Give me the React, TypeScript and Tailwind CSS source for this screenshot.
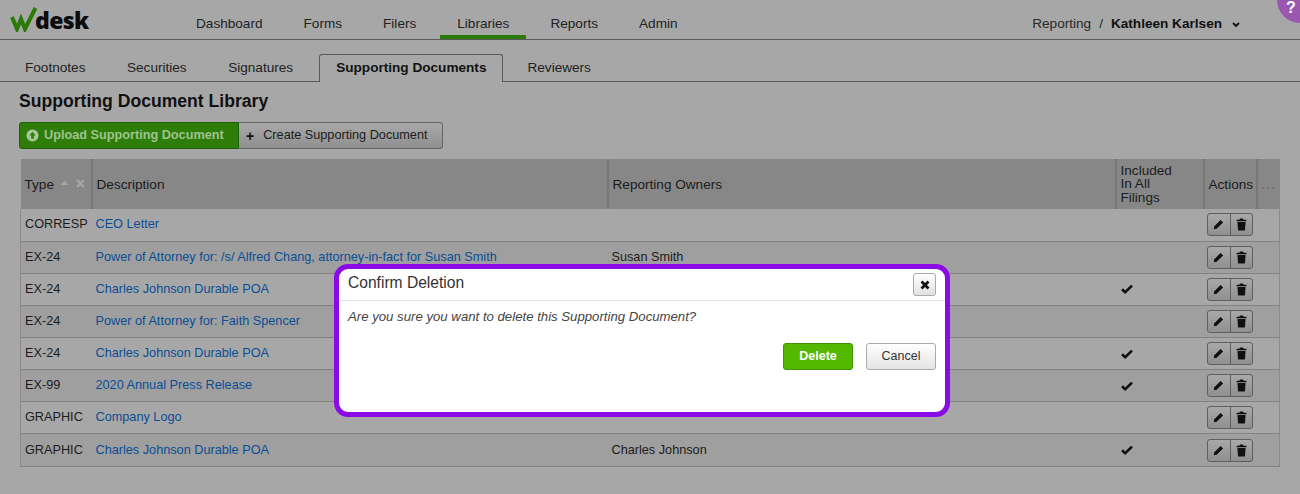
import React from "react";

const font = "font-['Liberation_Sans',Arial,sans-serif]";

const navItems = ["Dashboard", "Forms", "Filers", "Libraries", "Reports", "Admin"];
const tabs = ["Footnotes", "Securities", "Signatures", "Supporting Documents", "Reviewers"];

const rows = [
  { type: "CORRESP", desc: "CEO Letter", owner: "", check: false },
  { type: "EX-24", desc: "Power of Attorney for: /s/ Alfred Chang, attorney-in-fact for Susan Smith", owner: "Susan Smith", check: false },
  { type: "EX-24", desc: "Charles Johnson Durable POA", owner: "", check: true },
  { type: "EX-24", desc: "Power of Attorney for: Faith Spencer", owner: "", check: false },
  { type: "EX-24", desc: "Charles Johnson Durable POA", owner: "", check: true },
  { type: "EX-99", desc: "2020 Annual Press Release", owner: "", check: true },
  { type: "GRAPHIC", desc: "Company Logo", owner: "", check: false },
  { type: "GRAPHIC", desc: "Charles Johnson Durable POA", owner: "Charles Johnson", check: true },
];

function CheckMark() {
  return (
    <svg width="12" height="10" viewBox="0 0 12 10" className="inline-block">
      <path d="M1 5.2 L4.2 8.2 L11 1.6" fill="none" stroke="#111" strokeWidth="2.6" />
    </svg>
  );
}

function TrashIcon() {
  return (
    <svg width="11" height="13" viewBox="0 0 11 13">
      <path d="M4 .6 H7 L7.6 1.8 H10.4 V3.2 H.6 V1.8 H3.4 Z M1.4 4 H9.6 L9 12 Q8.9 12.6 8.2 12.6 H2.8 Q2.1 12.6 2 12 Z" fill="#111" />
    </svg>
  );
}

function PencilIcon() {
  return (
    <svg width="11" height="11" viewBox="0 0 11 11">
      <path d="M7.6 .9 L10.1 3.4 L3.6 9.7 L.8 10.3 L1.3 7.3 Z" fill="#111" />
    </svg>
  );
}

export default function App() {
  return (
    <div className={`${font} relative h-[494px] w-[1300px] overflow-hidden bg-[#a7a7a7] text-[#1c1c1c]`}>
      {/* Top bar */}
      <header className="relative flex h-10 items-stretch border-b border-[#5a5a5a]">
        <div className="flex w-[179px] items-center pl-[10px]">
          <svg width="27" height="25" viewBox="0 0 27 25" className="shrink-0">
            <path d="M2 10 L7 22 L11 12 L15 22 L25.5 1" fill="none" stroke="#2a7a08" strokeWidth="4" />
          </svg>
          <span className="ml-[-2px] mt-[1px] font-['Open_Sans',sans-serif] text-[23px] font-extrabold leading-none tracking-[-0.6px] text-[#0c0c0c]">
            desk
          </span>
        </div>
        <nav className="flex gap-[7px]">
          {navItems.map((n) => (
            <a
              key={n}
              className={`flex h-[39px] items-center border-b-4 px-[17px] pt-[13px] text-[13.6px] text-[#222] ${n === "Libraries" ? "border-[#2a7a08]" : "border-transparent"}`}
            >
              {n}
            </a>
          ))}
        </nav>
        <div className="ml-auto mr-[60px] flex items-center pt-[9px] text-[13.6px]">
          <span className="text-[#2a2a2a]">Reporting</span>
          <span className="mx-[8px] text-[#2a2a2a]">/</span>
          <span className="font-bold text-[#111]">Kathleen Karlsen</span>
          <svg width="8" height="6" viewBox="0 0 8 6" className="ml-[10px] mt-[2px]">
            <path d="M1 1 L4 4 L7 1" fill="none" stroke="#111" strokeWidth="1.8" />
          </svg>
        </div>
        <div className="absolute left-[1277px] top-[-23px] flex h-[46px] w-[46px] items-end rounded-full bg-[#9a57b0] pb-[3px] pl-[9px] text-base leading-[24px] font-bold text-white">
          ?
        </div>
      </header>

      {/* Tabs */}
      <div className="mt-[14px] flex h-[28px] items-end border-b border-[#5a5a5a] pl-[8px]">
        {tabs.map((t) => (
          <div
            key={t}
            className={
              t === "Supporting Documents"
                ? "mb-[-1px] ml-[1.5px] flex h-[28px] items-center rounded-t-[3px] border border-b-0 border-[#5a5a5a] bg-[#a7a7a7] px-4 text-[13.6px] font-bold text-[#111]"
                : "mr-[7.5px] flex h-[27px] items-center px-[17px] pt-[1px] text-[13.6px] text-[#222] last:ml-[7px]"
            }
          >
            {t}
          </div>
        ))}
      </div>

      <main className="px-[19px]">
        <h1 className="mt-[9px] text-[17.6px] leading-[21px] font-bold text-[#111]">Supporting Document Library</h1>

        {/* Buttons */}
        <div className="mt-[10px] flex h-[27px] w-[424px] text-[12.7px]">
          <button className="flex w-[220px] items-center rounded-l-[3px] border border-[#1f5f05] bg-[#2f7d09] pl-[6px] pt-[1px] font-bold text-[#9fc28f]">
            <svg width="13" height="13" viewBox="0 0 13 13" className="mr-[5px] mt-[-1px]">
              <circle cx="6.5" cy="6.5" r="6" fill="#a8c79b" />
              <path d="M6.5 2.8 L9.6 6.4 H7.8 V9.8 H5.2 V6.4 H3.4 Z" fill="#2f7d09" />
            </svg>
            Upload Supporting Document
          </button>
          <button className="flex flex-1 items-center rounded-r-[3px] border border-l-0 border-[#666] bg-gradient-to-b from-[#a9a9a9] to-[#8f8f8f] pl-[7px] pt-[1px] text-[#1c1c1c]">
            <span className="mr-[9px] text-sm leading-none font-bold text-[#111]">+</span>
            Create Supporting Document
          </button>
        </div>

        {/* Table */}
        <table className="mt-[10px] ml-[1px] w-[1259px] table-fixed border-collapse text-[12.7px]">
          <colgroup>
            <col className="w-[71px]" />
            <col className="w-[516px]" />
            <col className="w-[508px]" />
            <col className="w-[88px]" />
            <col className="w-[53px]" />
            <col className="w-[23px]" />
          </colgroup>
          <thead>
            <tr className="h-[50px] bg-[#878787] text-left text-[13.6px]">
              <th className="border-r-2 border-[#777] pl-[4px] pt-[2px] font-normal whitespace-nowrap">
                <span className="flex items-center">
                  Type
                  <svg width="9" height="6" viewBox="0 0 9 6" className="ml-[6px] mt-[-3px]">
                    <path d="M4.5 .5 L8.5 5 H.5 Z" fill="#a4a4a4" />
                  </svg>
                  <svg width="9" height="9" viewBox="0 0 9 9" className="ml-[7px] mt-[-3px]">
                    <path d="M1.2 1.2 L7.8 7.8 M7.8 1.2 L1.2 7.8" stroke="#a4a4a4" strokeWidth="2.4" />
                  </svg>
                </span>
              </th>
              <th className="border-r-2 border-[#777] pl-[4px] pt-[2px] font-normal">Description</th>
              <th className="border-r-2 border-[#777] pl-[4px] pt-[2px] font-normal">Reporting Owners</th>
              <th className="border-r-2 border-[#777] pl-[4px] leading-[13.6px] font-normal">
                Included
                <br />
                In All
                <br />
                Filings
              </th>
              <th className="border-r-2 border-[#777] pl-[4px] pt-[2px] font-normal">Actions</th>
              <th className="pl-[4px] pt-[2px] font-normal tracking-[1px] text-[#5f5f5f]">...</th>
            </tr>
          </thead>
          <tbody className="border-x border-[#8b8b8b]">
            {rows.map((r, i) => (
              <tr key={i} className={`h-[32.15px] border-b border-[#828282] ${i % 2 === 1 ? "bg-[#9f9f9f]" : "bg-[#a7a7a7]"}`}>
                <td className="pl-[4px] whitespace-nowrap">{r.type}</td>
                <td className="pl-[4px] text-[#0a4e96]">{r.desc}</td>
                <td className="pl-[4px]">{r.owner}</td>
                <td className="pl-[5px]">{r.check && <CheckMark />}</td>
                <td className="pl-[3px]">
                  <div className="flex h-[23px] w-[46px] overflow-hidden rounded-[3px] border border-[#5f5f5f] bg-gradient-to-b from-[#a9a9a9] to-[#8f8f8f]">
                    <span className="flex w-[23px] items-center justify-center border-r border-[#5f5f5f]">
                      <PencilIcon />
                    </span>
                    <span className="flex flex-1 items-center justify-center">
                      <TrashIcon />
                    </span>
                  </div>
                </td>
                <td></td>
              </tr>
            ))}
          </tbody>
        </table>
      </main>

      {/* Dialog */}
      <div className="absolute left-[334px] top-[264px] h-[153px] w-[616px] rounded-[14px] border-[5px] border-[#8a0be6] bg-white text-[#333]">
        <div className="flex h-[32px] items-center justify-between border-b border-[#e2e2e2] pl-[9px] pr-[9px]">
          <span className="mb-[4px] text-[15.6px]">Confirm Deletion</span>
          <button className="flex h-[23px] w-[23px] items-center justify-center rounded-[3px] border border-[#aaa] bg-gradient-to-b from-white to-[#e2e2e2]">
            <svg width="10" height="10" viewBox="0 0 10 10">
              <path d="M1.5 1.5 L8.5 8.5 M8.5 1.5 L1.5 8.5" stroke="#111" strokeWidth="2.8" />
            </svg>
          </button>
        </div>
        <p className="mt-[9px] pl-[9px] text-[13.2px] leading-[14px] text-[#444] italic">Are you sure you want to delete this Supporting Document?</p>
        <div className="mt-[19px] flex justify-end gap-[13px] pr-[9px] text-[12.5px]">
          <button className="flex h-[27px] w-[70px] items-center justify-center rounded-[3px] border border-[#3f9400] bg-[#55b800] font-bold text-white">
            Delete
          </button>
          <button className="flex h-[27px] w-[70px] items-center justify-center rounded-[3px] border border-[#aaa] bg-gradient-to-b from-white to-[#e4e4e4] text-[#333]">
            Cancel
          </button>
        </div>
      </div>
    </div>
  );
}
